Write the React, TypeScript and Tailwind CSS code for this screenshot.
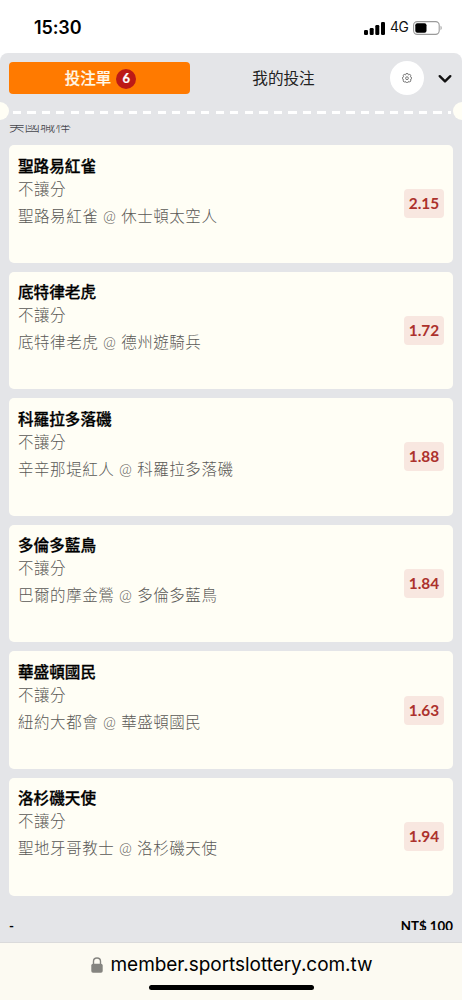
import { useState } from "react";

type Bet = {
  id: string;
  pick: string;
  market: string;
  match: string;
  odds: string;
};

const BETS: Bet[] = [
  { id: "1", pick: "聖路易紅雀", market: "不讓分", match: "聖路易紅雀 @ 休士頓太空人", odds: "2.15" },
  { id: "2", pick: "底特律老虎", market: "不讓分", match: "底特律老虎 @ 德州遊騎兵", odds: "1.72" },
  { id: "3", pick: "科羅拉多落磯", market: "不讓分", match: "辛辛那堤紅人 @ 科羅拉多落磯", odds: "1.88" },
  { id: "4", pick: "多倫多藍鳥", market: "不讓分", match: "巴爾的摩金鶯 @ 多倫多藍鳥", odds: "1.84" },
  { id: "5", pick: "華盛頓國民", market: "不讓分", match: "紐約大都會 @ 華盛頓國民", odds: "1.63" },
  { id: "6", pick: "洛杉磯天使", market: "不讓分", match: "聖地牙哥教士 @ 洛杉磯天使", odds: "1.94" },
];

function StatusBar() {
  return (
    <div className="h-[53px] shrink-0 flex items-center justify-between pl-[34px] pr-[19px] pt-[3px]">
      <span className="font-['Inter',sans-serif] font-semibold text-[18px] leading-none tracking-[-0.1px] text-black">15:30</span>
      <div className="flex items-center">
        {/* Signal */}
        <svg width="21" height="13" viewBox="0 0 21 13" fill="#000">
          <rect x="0" y="8" width="4" height="5" rx="1.2" />
          <rect x="5.7" y="6" width="4" height="7" rx="1.2" />
          <rect x="11.3" y="3" width="4" height="10" rx="1.2" />
          <rect x="17" y="0" width="4" height="13" rx="1.2" />
        </svg>
        <span className="ml-[5px] w-[18px] font-['Inter',sans-serif] text-[13.8px] leading-none tracking-[-0.4px] text-[#111111]">4G</span>
        {/* Battery */}
        <svg className="ml-[5px]" width="30" height="14" viewBox="0 0 30 14">
          <rect x="0.6" y="0.6" width="25.6" height="12.8" rx="3.6" fill="none" stroke="#9a9a9a" strokeWidth="1.1" />
          <rect x="2.3" y="2.3" width="11.2" height="9.4" rx="2" fill="#000" />
          <path d="M27.6 4.8c1.3.5 1.3 3.9 0 4.4z" fill="#8a8a8a" />
        </svg>
      </div>
    </div>
  );
}

function GearIcon() {
  return (
    <svg width="10" height="10" viewBox="0 0 20 20" fill="none" stroke="#505050" strokeWidth="1.5" strokeLinejoin="round">
      <path d="M8.3 1h3.4l.6 2.2 1.3.6 2-1.1L18 5l-1.1 2 .5 1.3L19.5 9v2.8l-2.2.7-.6 1.3 1.1 2-2.3 2.3-2-1.1-1.3.5-.6 2.1H8.3l-.6-2.1-1.3-.5-2 1.1L2 15.8l1.1-2-.5-1.3-2.1-.7V9l2.1-.7.5-1.3L2 5l2.4-2.3 2 1.1 1.3-.6z" />
      <circle cx="10" cy="10.4" r="2.8" />
    </svg>
  );
}

function BetCard({ bet }: { bet: Bet }) {
  return (
    <div className="h-[117.6px] shrink-0 bg-[#FFFEF5] rounded-[5px] flex items-center justify-between px-[9px]">
      <div className="self-stretch pt-[8.5px] whitespace-nowrap">
        <p className="text-[15.6px] leading-[24px] font-medium text-black [-webkit-text-stroke:0.3px_#000]">{bet.pick}</p>
        <p className="text-[15.5px] leading-[23px] tracking-[0.5px] font-light text-[#5A5955]">{bet.market}</p>
        <p className="mt-[4px] text-[15.5px] leading-[23px] tracking-[0.55px] font-light text-[#5A5955]">{bet.match}</p>
      </div>
      <div className="w-10 h-[29px] rounded-[4px] bg-[#F8E7E0] flex items-center justify-center text-[15.4px] font-bold text-[#AC312C]">
        {bet.odds}
      </div>
    </div>
  );
}

export default function App() {
  const [tab, setTab] = useState<"slip" | "mine">("slip");

  return (
    <div className="w-[462px] h-[1000px] overflow-hidden bg-white flex flex-col font-['Lato','Noto_Sans_CJK_TC',sans-serif]">
      <StatusBar />

      <div className="h-[889px] shrink-0 bg-[#E4E5E8] rounded-t-[8px] flex flex-col overflow-hidden">
        {/* Tabs */}
        <div className="flex items-center pt-2 px-[9px] shrink-0">
          <button
            onClick={() => setTab("slip")}
            className="w-[181px] h-8 pt-px pl-[2px] rounded-[4px] bg-[#FF7A00] flex items-center justify-center gap-[5px] text-[15.5px] font-medium text-[#FFF8E8] [-webkit-text-stroke:0.2px]"
            aria-pressed={tab === "slip"}
          >
            投注單
            <span className="w-5 h-5 rounded-full bg-[#BC1A16] flex items-center justify-center text-[13px] leading-none font-bold text-white">6</span>
          </button>
          <button
            onClick={() => setTab("mine")}
            className="w-[187px] h-8 pt-px text-[15.6px] text-[#222222]"
            aria-pressed={tab === "mine"}
          >
            我的投注
          </button>
          <button className="ml-[13px] w-[34px] h-[34px] rounded-full bg-white flex items-center justify-center">
            <GearIcon />
          </button>
          <button className="ml-[14px] pt-[2px]">
            <svg width="14" height="10" viewBox="0 0 14 10" fill="none" stroke="#111111" strokeWidth="2.4" strokeLinecap="round" strokeLinejoin="round">
              <path d="M1.7 2.2L7 7.4l5.3-5.2" />
            </svg>
          </button>
        </div>

        {/* Ticket perforation */}
        <div className="h-[18px] mt-[7px] -mx-[9px] flex items-center justify-between shrink-0">
          <span className="w-[18px] h-[18px] rounded-full bg-[#FFFEF5]" />
          <span className="flex-1 ml-[4px] mr-[2px] h-[3px] mt-[3px] bg-[repeating-linear-gradient(to_right,#ffffff_0_8px,transparent_8px_14.5px)]" />
          <span className="w-[18px] h-[18px] rounded-full bg-[#FFFEF5]" />
        </div>

        {/* Scrolled list */}
        <div className="h-[771px] shrink-0 mt-[5px] px-[9px] overflow-hidden flex flex-col">
          <p className="-mt-[11px] h-[31px] shrink-0 text-[15.5px] leading-[23px] font-light text-[#45464C]">美國職棒</p>
          <div className="flex flex-col gap-[9px] shrink-0">
            {BETS.map((bet) => (
              <BetCard key={bet.id} bet={bet} />
            ))}
          </div>
        </div>

        {/* Stake row, cut by the browser bar */}
        <div className="h-[34px] px-[9px] pt-[21px] overflow-hidden flex justify-between shrink-0 text-[13.3px] leading-[18px] font-bold text-black">
          <span>-</span>
          <span>NT$ 100</span>
        </div>
      </div>

      {/* Browser bar */}
      <div className="flex-1 border-t border-[#DADADB] bg-[#FCFAF2] flex flex-col items-center">
        <div className="mt-[9px] ml-[2px] h-[25px] flex items-center gap-[7px]">
          <svg width="12" height="16" viewBox="0 0 12 16">
            <rect x="0.3" y="6.7" width="11.4" height="9" rx="1.7" fill="#858480" />
            <path d="M2.5 7.5V4.3C2.5 2 4 1 6 1s3.5 1 3.5 3.3v3.2" fill="none" stroke="#858480" strokeWidth="1.4" />
          </svg>
          <span className="font-['Inter',sans-serif] text-[19px] leading-none tracking-[-0.04px] text-black">member.sportslottery.com.tw</span>
        </div>
        <div className="mt-[8px] w-[165px] h-[5px] rounded-full bg-black" />
      </div>
    </div>
  );
}
